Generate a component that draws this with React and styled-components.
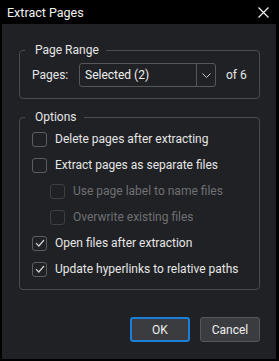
import React from 'react';
import styled, { createGlobalStyle } from 'styled-components';

const Global = createGlobalStyle`
    html, body {
        margin: 0;
        padding: 0;
        background: #000;
    }
    body {
        font-family: Roboto, "Liberation Sans", sans-serif;
        color: #e6e6e6;
    }
`

const Window = styled.div`
    width: 279px;
    height: 361px;
    background: #000;
    display: flex;
    flex-direction: column;
    box-sizing: border-box;
    padding: 0 3px 2px 2px;
`
const TitleBar = styled.div`
    height: 24px;
    display: flex;
    align-items: center;
    justify-content: space-between;
    padding: 0 7px 0 5px;
    font-size: 12.5px;
    color: #f2f2f2;
`
const Close = styled.svg`
    width: 11px;
    height: 11px;
`
const Body = styled.div`
    flex: 1;
    background: #202124;
    padding: 18px 16px 0 17px;
    display: flex;
    flex-direction: column;
    white-space: nowrap;
`
const Group = styled.fieldset`
    margin: 0 0 ${props => props.$gap || 0}px;
    border: 1px solid #4b4c50;
    border-radius: 4px;
    padding: ${props => props.$pad};
    min-width: 0;
`
const Legend = styled.legend`
    margin-left: -7px;
    padding: 0 7px 0 10px;
    font-size: 12px;
    line-height: 16px;
    color: #e6e6e6;
`
const PagesRow = styled.div`
    display: flex;
    align-items: center;
    height: 24px;
    font-size: 12px;
`
const PagesLabel = styled.span`
    width: 47px;
`
const Select = styled.div`
    width: 137px;
    height: 24px;
    box-sizing: border-box;
    border: 1px solid #55575b;
    border-radius: 3px;
    display: flex;
    align-items: stretch;
`
const SelectValue = styled.span`
    flex: 1;
    display: flex;
    align-items: center;
    padding-left: 5px;
    color: #f0f0f0;
`
const SelectArrow = styled.span`
    width: 18px;
    border-left: 1px solid #55575b;
    display: flex;
    align-items: center;
    justify-content: center;
`
const OfTotal = styled.span`
    margin-left: 10px;
`
const Option = styled.label`
    display: flex;
    align-items: center;
    height: 26px;
    padding-left: ${props => props.$indent ? 18 : 0}px;
    font-size: 12px;
    color: ${props => props.$disabled ? '#6f7073' : '#e6e6e6'};
`
const Box = styled.span`
    width: 15px;
    height: 15px;
    box-sizing: border-box;
    border: 1px solid ${props => props.$disabled ? '#3e3f42' : '#5c5d60'};
    border-radius: 3px;
    margin-right: 8px;
    display: flex;
    align-items: center;
    justify-content: center;
`
const Buttons = styled.div`
    display: flex;
    justify-content: flex-end;
    gap: 10px;
    margin-top: 27px;
`
const Button = styled.button`
    width: 60px;
    height: 25px;
    box-sizing: border-box;
    background: #3b3c3f;
    border: ${props => props.$primary ? '2px solid #1b7fd6' : '1px solid #55575b'};
    border-radius: 3px;
    color: #f0f0f0;
    font-family: inherit;
    font-size: 12px;
    padding: 0;
`

const Check = () => (
    <svg width="10" height="8" viewBox="0 0 10 8">
        <path d="M1 4.2 L3.8 7 L9 1" fill="none" stroke="#d4d4d4" strokeWidth="1.2" />
    </svg>
)

const options = [
    { text: 'Delete pages after extracting' },
    { text: 'Extract pages as separate files' },
    { text: 'Use page label to name files', indent: true, disabled: true },
    { text: 'Overwrite existing files', indent: true, disabled: true },
    { text: 'Open files after extraction', checked: true },
    { text: 'Update hyperlinks to relative paths', checked: true },
]

const App = () => {
    return (
        <Window>
            <Global />
            <TitleBar>
                <span>Extract Pages</span>
                <Close viewBox="0 0 11 11">
                    <path d="M0.5 0.5 L10.5 10.5 M10.5 0.5 L0.5 10.5" stroke="#f0f0f0" strokeWidth="1.2" />
                </Close>
            </TitleBar>
            <Body>
                <Group $pad="5px 12px 11px" $gap={10}>
                    <Legend>Page Range</Legend>
                    <PagesRow>
                        <PagesLabel>Pages:</PagesLabel>
                        <Select>
                            <SelectValue>Selected (2)</SelectValue>
                            <SelectArrow>
                                <svg width="9" height="5" viewBox="0 0 9 5">
                                    <path d="M0.5 0.5 L4.5 4.5 L8.5 0.5" fill="none" stroke="#c8c8c8" strokeWidth="1" />
                                </svg>
                            </SelectArrow>
                        </Select>
                        <OfTotal>of 6</OfTotal>
                    </PagesRow>
                </Group>
                <Group $pad="1px 12px 7px">
                    <Legend>Options</Legend>
                    {options.map(o => (
                        <Option key={o.text} $indent={o.indent} $disabled={o.disabled}>
                            <Box $disabled={o.disabled}>{o.checked ? <Check /> : null}</Box>
                            {o.text}
                        </Option>
                    ))}
                </Group>
                <Buttons>
                    <Button $primary>OK</Button>
                    <Button>Cancel</Button>
                </Buttons>
            </Body>
        </Window>
    )
}

export default App;
